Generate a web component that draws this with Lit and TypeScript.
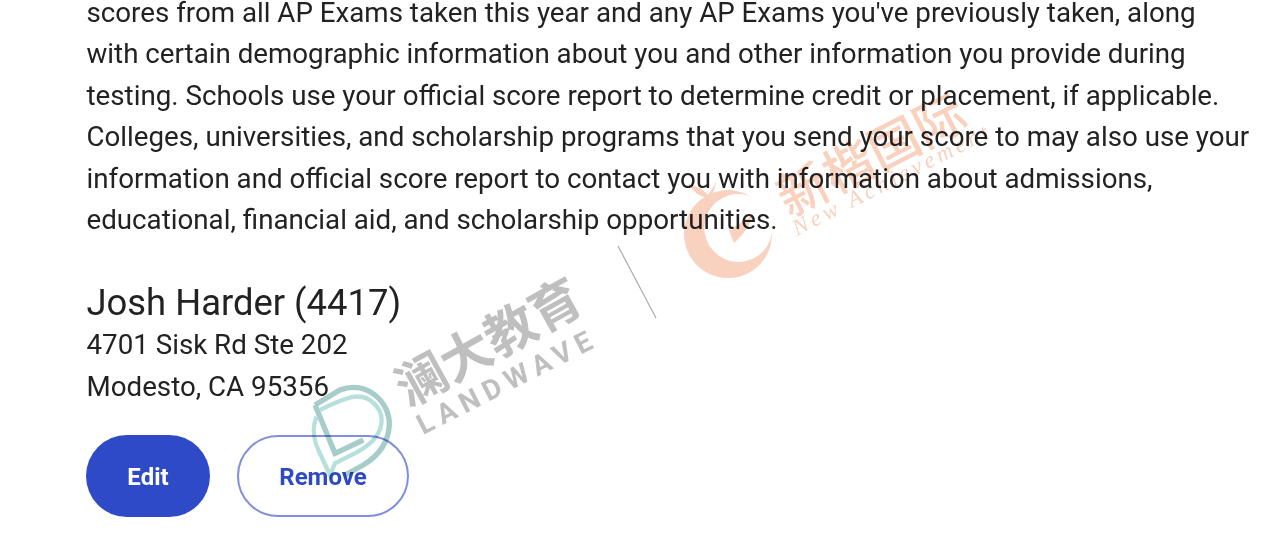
import { LitElement, html, css } from "lit";
import { customElement } from "lit/decorators.js";

@customElement("app-root")
export class AppRoot extends LitElement {
  static styles = css`
    :host { display: block; position: relative; width: 1280px; height: 554px; overflow: hidden; background: #fff; font-family: Roboto, "Liberation Sans", sans-serif; color: #222; }
    .content { display: flex; flex-direction: column; margin-top: -8.5px; padding: 0 20px 0 86.5px; }
    p { margin: 0; font-size: 27.72px; line-height: 41.6px; white-space: nowrap; }
    h2 { margin: 41px 0 0; font-weight: 400; font-size: 36.4px; line-height: 42px; }
    .actions { display: flex; gap: 27px; margin: 27.5px 0 0 -0.5px; }
    button { height: 82px; border-radius: 41px; font: 700 24px Roboto, sans-serif; padding: 2px 0 0; box-sizing: border-box; }
    .edit { width: 124px; background: #2f4ac6; color: #fff; border: none; }
    .remove { width: 172px; background: #fff; color: #2f4ac6; border: 2px solid #7f8fdc; }
    .wm { position: absolute; inset: 0; width: 1280px; height: 554px; pointer-events: none; mix-blend-mode: multiply; }
    .zh { font-family: "Noto Sans CJK SC", sans-serif; }
  `;
  render() {
    return html`
      <div class="content">
        <p>scores from all AP Exams taken this year and any AP Exams you've previously taken, along</p>
        <p>with certain demographic information about you and other information you provide during</p>
        <p>testing. Schools use your official score report to determine credit or placement, if applicable.</p>
        <p>Colleges, universities, and scholarship programs that you send your score to may also use your</p>
        <p>information and official score report to contact you with information about admissions,</p>
        <p>educational, financial aid, and scholarship opportunities.</p>
        <h2>Josh Harder (4417)</h2>
        <p>4701 Sisk Rd Ste 202</p>
        <p>Modesto, CA 95356</p>
        <div class="actions">
          <button class="edit">Edit</button>
          <button class="remove">Remove</button>
        </div>
      </div>
      <svg class="wm" viewBox="0 0 1280 554">
        <line x1="618" y1="246" x2="656" y2="318" stroke="#aaa" stroke-width="1.2"/>
        <g fill="#bfbfbf">
          <text class="zh" transform="translate(408 408) rotate(-29)" font-size="51" font-weight="700">澜大教育</text>
          <text transform="translate(423 435) rotate(-27)" font-size="28" font-weight="700" font-family="Roboto" letter-spacing="6.4">LANDWAVE</text>
        </g>
        <g transform="translate(300 375) scale(.3333)" fill="none">
          <path d="M45 90 L120 45 C200 15 270 80 268 150 C265 200 240 240 190 270 L135 300 M45 90 L105 235 L190 195" stroke="#a6cdc9" stroke-width="16"/>
          <path d="M50 125 C35 160 40 190 55 225 L90 300 L105 265 L170 232 C220 205 245 170 245 135 C245 100 210 60 165 65 C130 70 90 90 60 105" stroke="#b7e0dc" stroke-width="13"/>
        </g>
        <g fill="#f9d2bf">
          <path fill-rule="evenodd" d="M750 196 A44 44 0 1 0 772 233 A34 34 0 1 1 750 196 Z"/>
          <path d="M728 228 L734 243 C742 236 750 226 754 213 C746 220 740 224 735 226 C733 230 731 232 728 228 Z"/>
          <path d="M688 184 Q700 186 708 195 Q712 190 716 182 Q714 196 707 198 Q696 196 688 184 Z"/>
          <text class="zh" transform="translate(789 218) rotate(-27)" font-size="51" font-weight="500">新楷国际</text>
          <text transform="translate(797 236) rotate(-27)" font-size="23" font-family="Liberation Serif" font-style="italic" letter-spacing="3.8">New Achievement</text>
        </g>
      </svg>
    `;
  }
}
